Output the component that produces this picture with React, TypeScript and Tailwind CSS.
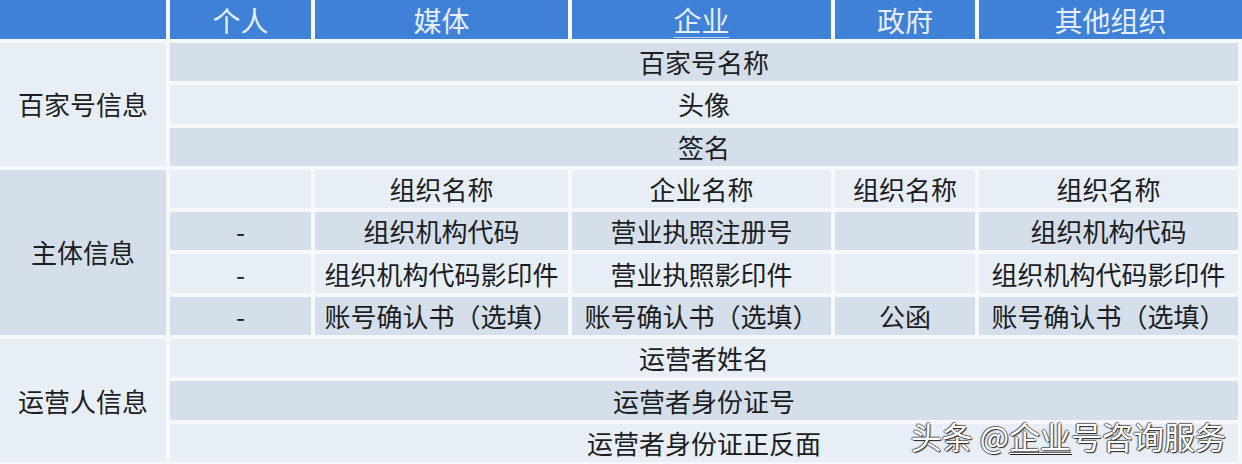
const dark = 'bg-[#d5dfeb]';
const light = 'bg-[#e8eef5]';

type Cell = { text: string; span?: string; bg: string };

const headers = ['', '个人', '媒体', '企业', '政府', '其他组织'];

function Td({ text, className }: { text: string; className: string }) {
  return (
    <div className={`flex items-center justify-center whitespace-nowrap text-[26px] leading-none text-[#1b1d22] ${className}`}>
      {text}
    </div>
  );
}

export default function App() {
  const subjectRows: Cell[][] = [
    [
      { text: '', bg: light },
      { text: '组织名称', bg: light },
      { text: '企业名称', bg: light },
      { text: '组织名称', bg: light },
      { text: '组织名称', bg: light },
    ],
    [
      { text: '-', bg: dark },
      { text: '组织机构代码', bg: dark },
      { text: '营业执照注册号', bg: dark },
      { text: '', bg: dark },
      { text: '组织机构代码', bg: dark },
    ],
    [
      { text: '-', bg: light },
      { text: '组织机构代码影印件', bg: light },
      { text: '营业执照影印件', bg: light },
      { text: '', bg: light },
      { text: '组织机构代码影印件', bg: light },
    ],
    [
      { text: '-', bg: dark },
      { text: '账号确认书（选填）', bg: dark },
      { text: '账号确认书（选填）', bg: dark },
      { text: '公函', bg: dark },
      { text: '账号确认书（选填）', bg: dark },
    ],
  ];

  return (
    <div
      className="relative h-[464px] w-[1242px] overflow-hidden bg-[#f6f8fb]"
      style={{ fontFamily: '"Noto Sans CJK SC", "Noto Sans", sans-serif' }}
    >
      <div className="grid grid-cols-[166px_141px_253px_259px_140px_259px] grid-rows-[39px_repeat(10,38.3px)] gap-[4px]">
        {/* Header */}
        {headers.map((h, i) => (
          <div
            key={i}
            className={`flex items-center justify-center bg-[#3e81d6] text-[28px] leading-none text-[#e6eefa] ${i === 5 ? 'mr-[-4px]' : ''}`}
          >
            <span className={h === '企业' ? 'underline decoration-1 decoration-[#b9d2f0] underline-offset-[5px]' : ''}>{h}</span>
          </div>
        ))}

        {/* 百家号信息 */}
        <Td text="百家号信息" className={`row-span-3 ${light}`} />
        <Td text="百家号名称" className={`col-span-5 ${dark}`} />
        <Td text="头像" className={`col-span-5 ${light}`} />
        <Td text="签名" className={`col-span-5 ${dark}`} />

        {/* 主体信息 */}
        <Td text="主体信息" className={`row-span-4 ${dark}`} />
        {subjectRows.flat().map((c, i) => (
          <Td key={i} text={c.text} className={c.bg} />
        ))}

        {/* 运营人信息 */}
        <Td text="运营人信息" className={`row-span-3 ${light}`} />
        <Td text="运营者姓名" className={`col-span-5 ${light}`} />
        <Td text="运营者身份证号" className={`col-span-5 ${dark}`} />
        <Td text="运营者身份证正反面" className={`col-span-5 ${light}`} />
      </div>

      {/* Watermark */}
      <div className="absolute right-[16px] bottom-[13px] whitespace-nowrap text-[31px] leading-none text-white [text-shadow:1px_1px_1px_#222,-1px_0_1px_#555,0_-1px_1px_#666]">
        头条 @<span className="underline decoration-1 underline-offset-[4px]">企业</span>号咨询服务
      </div>
    </div>
  );
}
